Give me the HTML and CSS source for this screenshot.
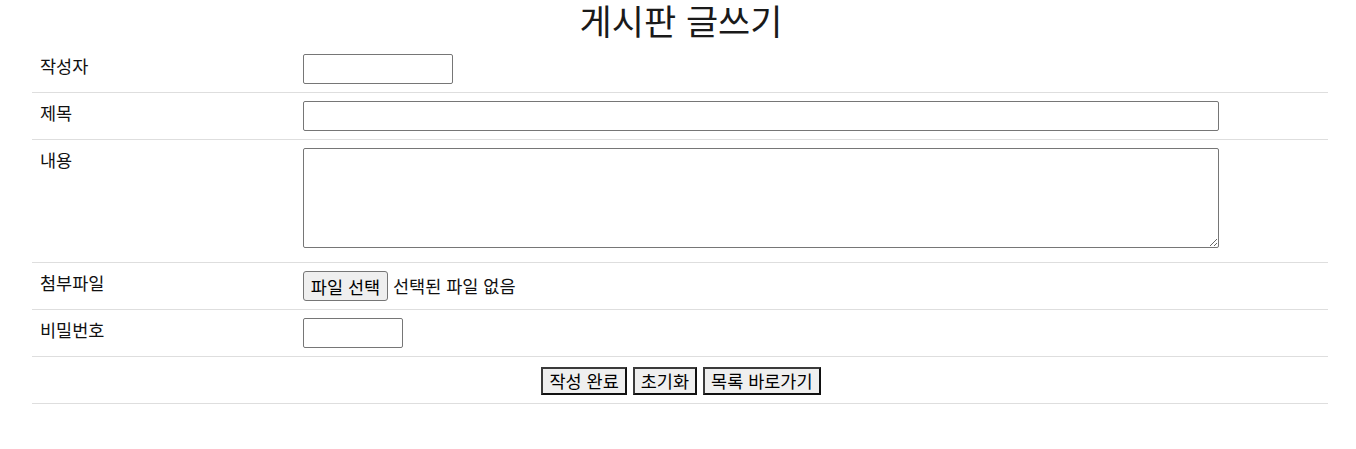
FILE: index.html
```html
<!DOCTYPE html>
<html lang="ko">
<head>
<meta charset="utf-8">
<title>게시판 글쓰기</title>
<link rel="stylesheet" href="styles.css">
</head>
<body>
<h1 class="title">게시판 글쓰기</h1>
<form class="write-form">
<table class="board">
  <tr>
    <td class="label">작성자</td>
    <td class="field"><input class="txt w-short" type="text"></td>
  </tr>
  <tr>
    <td class="label">제목</td>
    <td class="field"><input class="txt w-long" type="text"></td>
  </tr>
  <tr>
    <td class="label">내용</td>
    <td class="field"><textarea class="area"></textarea></td>
  </tr>
  <tr>
    <td class="label">첨부파일</td>
    <td class="field"><div class="file"><button type="button" class="file-btn">파일 선택</button><span class="file-name">선택된 파일 없음</span></div></td>
  </tr>
  <tr>
    <td class="label">비밀번호</td>
    <td class="field"><input class="txt w-pass" type="password"></td>
  </tr>
  <tr>
    <td class="actions" colspan="2">
      <div class="btns">
        <button type="submit" class="btn">작성 완료</button>
        <button type="reset" class="btn">초기화</button>
        <button type="button" class="btn">목록 바로가기</button>
      </div>
    </td>
  </tr>
</table>
</form>
</body>
</html>
```
FILE: styles.css
```css
body {
  margin: 0 8px;
  font-family: "Noto Sans CJK KR", "Noto Sans", sans-serif;
  font-size: 17.5px;
  color: #000;
  background: #fff;
}
.title {
  margin: 0;
  padding: 0 0 6px 6px;
  font-size: 35px;
  font-weight: 400;
  line-height: 40px;
  text-align: center;
  color: #1a1a1a;
}
.write-form {
  margin: 0 24px;
}
.board {
  width: 1296px;
  border-collapse: collapse;
  table-layout: fixed;
}
.board td {
  border-bottom: 1px solid #dedede;
  padding: 8px;
  vertical-align: top;
}
.label {
  width: 247px;
  line-height: 22px;
  color: #111;
  padding-top: 9px !important;
}
.field {
  line-height: 30px;
}
.txt {
  display: block;
  box-sizing: border-box;
  height: 30px;
  margin: 0;
  border: 1px solid #767676;
  border-radius: 2px;
  padding: 1px 4px;
  font: inherit;
  background: #fff;
}
.w-short { width: 150px; }
.w-long { width: 916px; }
.w-pass { width: 100px; }
.area {
  display: block;
  box-sizing: border-box;
  width: 916px;
  height: 100px;
  margin: 0 0 6px;
  border: 1px solid #767676;
  border-radius: 2px;
  font: inherit;
}
.file {
  display: flex;
  align-items: center;
  gap: 5px;
  height: 30px;
}
.file-btn {
  box-sizing: border-box;
  height: 30px;
  width: 85px;
  padding: 0;
  border: 1px solid #767676;
  border-radius: 3px;
  background: #efefef;
  font: inherit;
  color: #000;
}
.file-name {
  color: #111;
}
.actions {
  padding-top: 10px !important;
}
.btns {
  display: flex;
  justify-content: center;
  gap: 6px;
  height: 28px;
  padding-left: 2px;
}
.btn {
  box-sizing: border-box;
  height: 28px;
  padding: 0 6px;
  border-width: 2px;
  border-style: solid;
  border-color: #3b3b3b #111 #111 #3b3b3b;
  border-radius: 0;
  background: #efefef;
  font: inherit;
  line-height: 24px;
  color: #000;
}
```
